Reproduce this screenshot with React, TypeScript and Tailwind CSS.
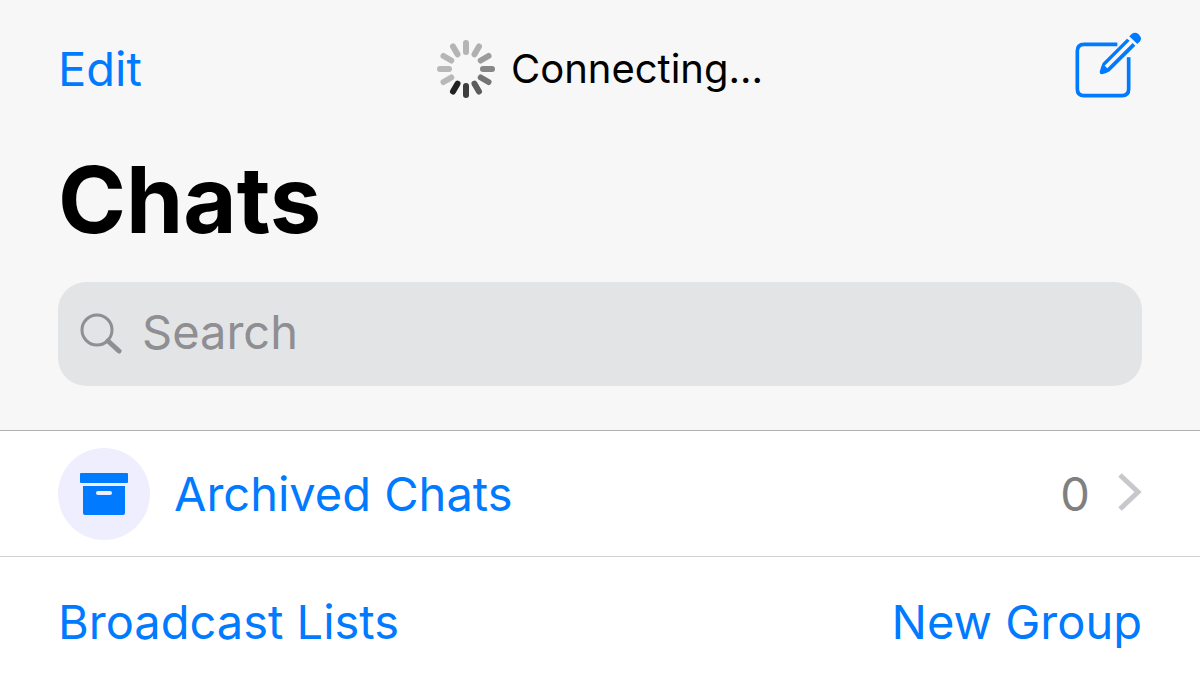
import { ChangeEvent, useState } from 'react';

const SPOKES = [
  '#b4b4b4', '#b0b0b0', '#9c9c9c', '#868686', '#747474', '#5c5c5c',
  '#3e3e3e', '#222222', '#b8b8b8', '#b8b8b8', '#b6b6b6', '#b4b4b4',
];

function Spinner() {
  return (
    <svg width="58" height="58" viewBox="0 0 58 58" aria-hidden="true">
      {SPOKES.map((color, i) => (
        <line
          key={i}
          x1="29" y1="3" x2="29" y2="12"
          stroke={color}
          strokeWidth="6"
          strokeLinecap="round"
          transform={`rotate(${i * 30} 29 29)`}
        />
      ))}
    </svg>
  );
}

function ComposeIcon() {
  return (
    <svg width="67" height="66" viewBox="75 36 201 198" fill="none" aria-hidden="true">
      <path d="M202 73H102q-20 0-20 20V207q0 20 20 20H216q20 0 20-20V112" stroke="currentColor" strokeWidth="11" />
      <path
        d="M231 56L158 129Q152 142 149 156Q149 163 156 163Q170 160 179 154L256 77L248 69L172 145L164 137L239 62Z"
        fill="currentColor"
      />
      <path d="M238 49L246 41Q256 35 265 42L270 48Q276 56 270 64L262 72Z" fill="currentColor" />
    </svg>
  );
}

function SearchIcon() {
  return (
    <svg width="42" height="42" viewBox="0 0 42 42" fill="none" stroke="currentColor" aria-hidden="true">
      <circle cx="17" cy="17" r="15" strokeWidth="3" />
      <path d="M28 28L39 38" strokeWidth="5" strokeLinecap="round" />
    </svg>
  );
}

function ArchiveIcon() {
  return (
    <svg width="48" height="42" viewBox="0 0 48 42" aria-hidden="true">
      <rect width="48" height="10" rx="1" fill="currentColor" />
      <path d="M3 13H45V40q0 2-2 2H5q-2 0-2-2Z" fill="currentColor" />
      <rect x="16" y="18" width="16" height="4" rx="2" fill="#efeeff" />
    </svg>
  );
}

function Chevron() {
  return (
    <svg className="mb-1" width="24" height="38" viewBox="0 0 24 38" fill="none" aria-hidden="true">
      <path d="M2 2L20 19L2 36" stroke="#c7c7cc" strokeWidth="5" />
    </svg>
  );
}

export default function App() {
  const [query, setQuery] = useState('');

  return (
    <div className="bg-white font-['Inter','Liberation_Sans',sans-serif] text-[47px] leading-[48px] text-[#007aff]">
      <header className="border-b border-[#b2b2b2] bg-[#f7f7f7] px-[58px] pb-11">
        {/* Nav bar */}
        <div className="grid h-[138px] grid-cols-[1fr_auto_1fr] items-center">
          <button type="button" className="justify-self-start">Edit</button>
          <div role="status" className="flex items-center gap-4 text-[40px] text-black">
            <Spinner />
            <span>Connecting...</span>
          </div>
          <button type="button" aria-label="New chat" className="mb-2 justify-self-end">
            <ComposeIcon />
          </button>
        </div>

        <h1 className="pt-[14px] text-[92px] leading-[96px] font-bold text-black">Chats</h1>

        {/* Search */}
        <label className="mt-[34px] flex h-[104px] items-center gap-5 rounded-[28px] bg-[#e3e4e6] px-[22px] text-[#8e8e93]">
          <SearchIcon />
          <input
            type="text"
            aria-label="Search"
            placeholder="Search"
            value={query}
            onChange={(e: ChangeEvent<HTMLInputElement>) => setQuery(e.target.value)}
            className="mb-1 min-w-0 flex-1 bg-transparent outline-none placeholder:text-[#8e8e93]"
          />
        </label>
      </header>

      <main>
        <button type="button" className="flex h-[126px] w-full items-center border-b border-[#d2d2d4] px-[58px] text-left">
          <span className="flex size-[92px] items-center justify-center rounded-full bg-[#efeeff]">
            <ArchiveIcon />
          </span>
          <span className="ml-6 flex-1">Archived Chats</span>
          <span className="mr-7 text-[#808080]">0</span>
          <Chevron />
        </button>

        <div className="flex h-[125px] items-center justify-between px-[58px] pt-1">
          <button type="button">Broadcast Lists</button>
          <button type="button">New Group</button>
        </div>
      </main>
    </div>
  );
}
